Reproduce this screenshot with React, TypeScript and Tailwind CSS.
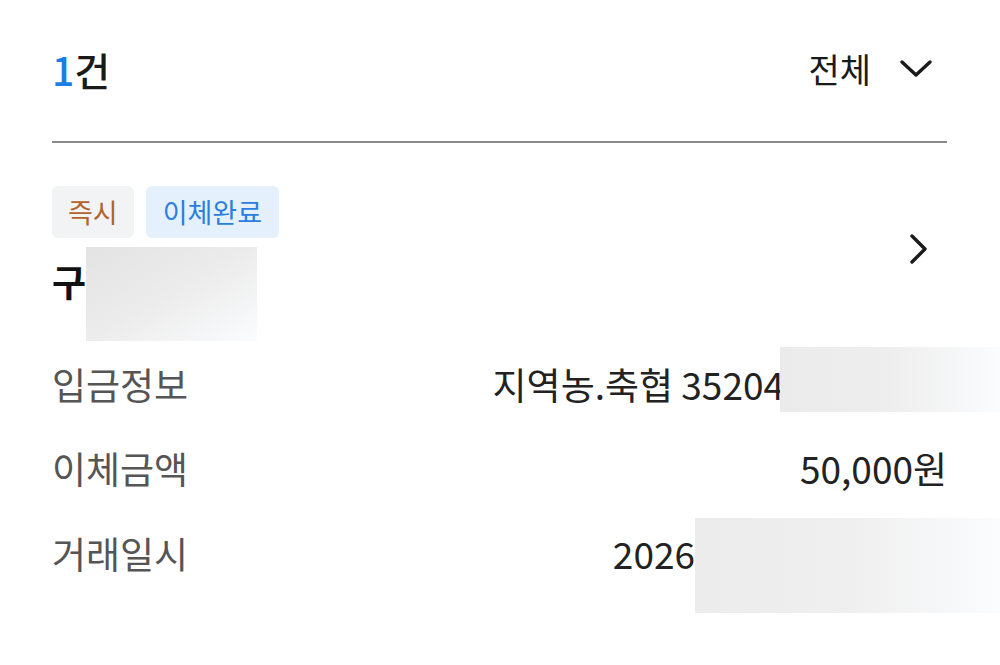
const FONT = "font-['Noto_Sans_CJK_KR','Noto_Sans',sans-serif]";

const Blur = ({ className }: { className: string }) => (
  <span className={`inline-block shrink-0 ${className}`} />
);

const ChevronDown = () => (
  <svg width="34" height="22" viewBox="0 0 34 22" fill="none">
    <path d="M3 4l14 13L31 4" stroke="#1a1a1a" strokeWidth="3.4" strokeLinecap="round" strokeLinejoin="round" />
  </svg>
);

const ChevronRight = () => (
  <svg width="22" height="32" viewBox="0 0 22 32" fill="none">
    <path d="M5 3l13 13L5 29" stroke="#1a1a1a" strokeWidth="3.4" strokeLinecap="round" strokeLinejoin="round" />
  </svg>
);

const label = "text-[37px] text-[#555555] leading-none";
const value = "text-[37px] text-[#222222] leading-none";

export default function App() {
  return (
    <div className={`w-[1000px] h-[665px] bg-white overflow-hidden ${FONT}`}>
      <div className="pl-[52px] pr-[53px]">
        {/* header */}
        <div className="flex items-center justify-between h-[143px] border-b-2 border-[#8a8a8a]">
          <div className="text-[39px] font-medium leading-none text-[#1a1a1a] -mt-[2px]">
            <span className="text-[#1b7de6]">1</span>건
          </div>
          <div className="flex items-center gap-[28px] pr-[14px] -mt-[4px]">
            <span className="text-[34px] leading-none text-[#1a1a1a]">전체</span>
            <ChevronDown />
          </div>
        </div>

        {/* item */}
        <div className="flex items-start justify-between pt-[43px]">
          <div>
            <div className="flex gap-[12px]">
              <span className="h-[52px] px-[16px] flex items-center rounded-[6px] bg-[#f2f3f5] text-[27px] text-[#b4622c]">
                즉시
              </span>
              <span className="h-[52px] px-[17px] flex items-center rounded-[6px] bg-[#e5f0fd] text-[27px] text-[#2b7ddf]">
                이체완료
              </span>
            </div>
            <div className="flex items-start mt-[9px]">
              <span className="text-[37px] font-bold leading-none text-[#111111] mt-[16px]">구</span>
              <Blur className="w-[171px] h-[94px] bg-gradient-to-br from-[#e3e3e3] via-[#ececec] to-[#fbfcfe]" />
            </div>
          </div>
          <div className="pt-[47px] pr-[18px]">
            <ChevronRight />
          </div>
        </div>
      </div>

      {/* detail rows */}
      <div className="pl-[52px] mt-[6px]">
        <div className="flex items-center justify-between h-[65px]">
          <span className={`${label} mt-[10px]`}>입금정보</span>
          <div className="flex items-center">
            <span className={`${value} mt-[10px]`}>지역농.축협 35204</span>
            <Blur className="w-[220px] h-[65px] -ml-[4px] bg-gradient-to-r from-[#ebebeb] via-[#eeeeee] to-[#fbfcfe]" />
          </div>
        </div>
        <div className="flex items-center justify-between h-[106px] pr-[53px]">
          <span className={`${label} mt-[6px]`}>이체금액</span>
          <span className={`${value} mt-[6px]`}>50,000원</span>
        </div>
        <div className="flex items-center justify-between h-[95px]">
          <span className={`${label} mb-[25px]`}>거래일시</span>
          <div className="flex items-center">
            <span className={`${value} mb-[25px]`}>2026</span>
            <Blur className="w-[305px] h-[95px] bg-gradient-to-r from-[#ececec] via-[#efefef] to-[#fbfcfe]" />
          </div>
        </div>
      </div>
    </div>
  );
}
